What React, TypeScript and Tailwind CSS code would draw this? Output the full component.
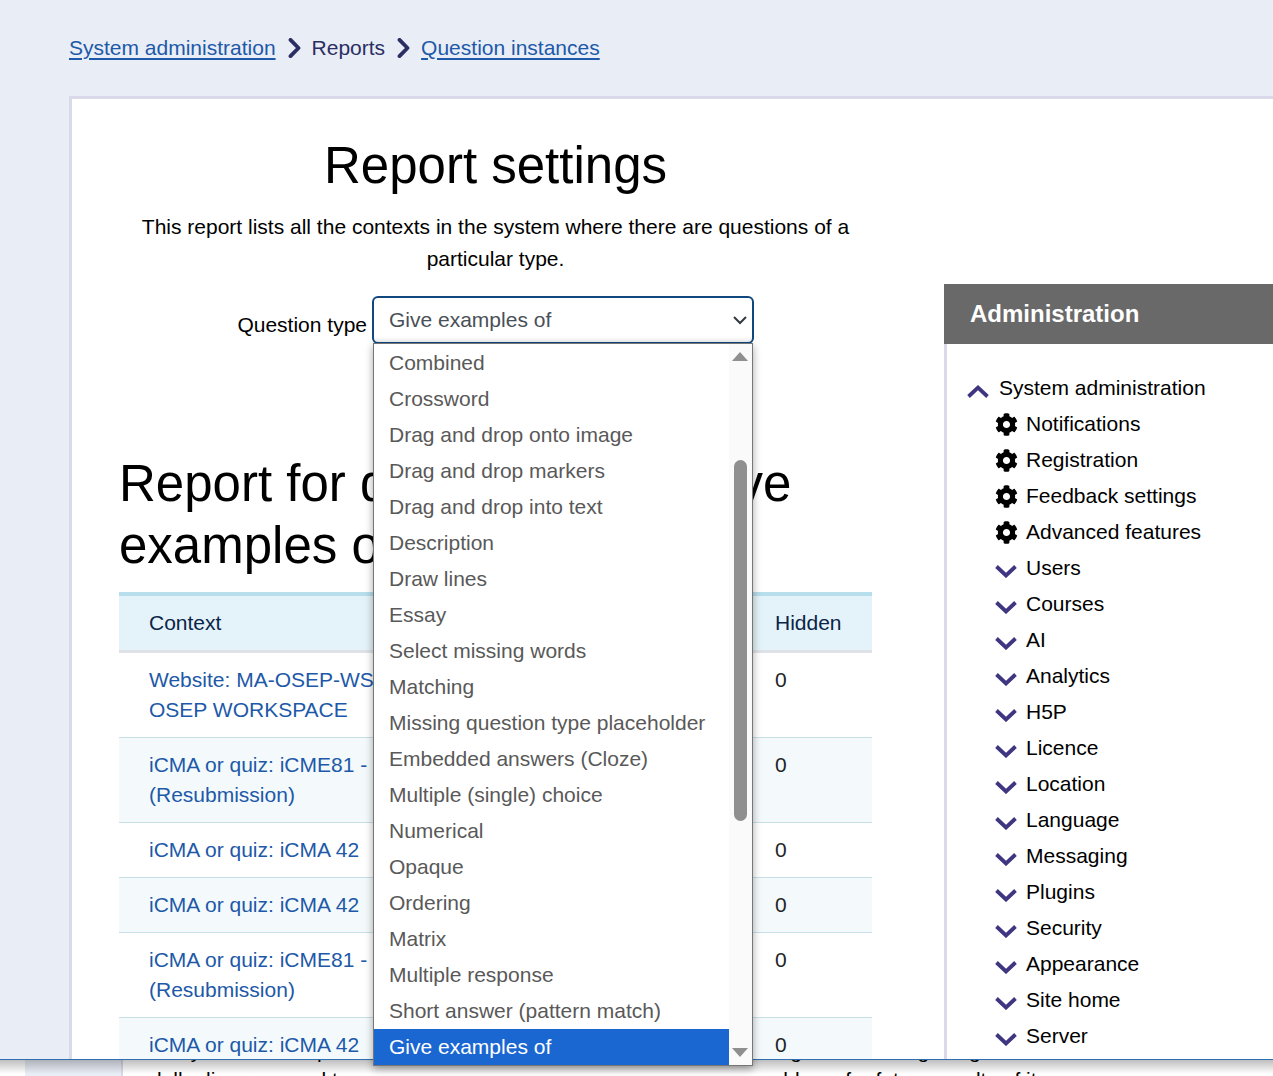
import { FaCog } from 'react-icons/fa';

const sans = "font-['Liberation_Sans',Arial,sans-serif]";

const options = [
  'Combined',
  'Crossword',
  'Drag and drop onto image',
  'Drag and drop markers',
  'Drag and drop into text',
  'Description',
  'Draw lines',
  'Essay',
  'Select missing words',
  'Matching',
  'Missing question type placeholder',
  'Embedded answers (Cloze)',
  'Multiple (single) choice',
  'Numerical',
  'Opaque',
  'Ordering',
  'Matrix',
  'Multiple response',
  'Short answer (pattern match)',
];

const rows = [
  { lines: ['Website: MA-OSEP-WS', 'OSEP WORKSPACE'], tint: false },
  { lines: ['iCMA or quiz: iCME81 -', '(Resubmission)'], tint: true },
  { lines: ['iCMA or quiz: iCMA 42'], tint: false },
  { lines: ['iCMA or quiz: iCMA 42'], tint: true },
  { lines: ['iCMA or quiz: iCME81 -', '(Resubmission)'], tint: false },
  { lines: ['iCMA or quiz: iCMA 42'], tint: true },
];

const adminGear = ['Notifications', 'Registration', 'Feedback settings', 'Advanced features'];
const adminChevron = [
  'Users',
  'Courses',
  'AI',
  'Analytics',
  'H5P',
  'Licence',
  'Location',
  'Language',
  'Messaging',
  'Plugins',
  'Security',
  'Appearance',
  'Site home',
  'Server',
];

const Crumb = () => (
  <svg width="13" height="20" viewBox="0 0 13 20" className="mr-[11px] ml-3 shrink-0" fill="none">
    <path d="M2.5 1.8 L10.5 10 L2.5 18.2" stroke="#2b2e63" strokeWidth="3.8" strokeLinejoin="round" strokeLinecap="round" />
  </svg>
);

const Chevron = ({ up = false }: { up?: boolean }) => (
  <svg width="22" height="14" viewBox="0 0 22 14" fill="none" className="mt-[5px] shrink-0">
    <path d={up ? 'M1.5 12.5 L11 3.5 L20.5 12.5' : 'M1.5 2.5 L11 11.5 L20.5 2.5'} stroke="#3f3681" strokeWidth="3.8" />
  </svg>
);

const App = () => {
  return (
    <div className={`${sans} relative h-[1076px] w-[1273px] overflow-hidden bg-white`}>
      <div className="h-[1060px] overflow-hidden border-b border-[#2f6fb0] bg-[#e9edf6] pl-[69px]">
        <nav className="flex h-[96px] items-center pb-[1px] text-[21px] text-[#2b2e63]">
          <a className="text-[#1d59a8] underline decoration-2 underline-offset-[3px]">System administration</a>
          <Crumb />
          <span>Reports</span>
          <Crumb />
          <a className="text-[#1d59a8] underline decoration-2 underline-offset-[3px]">Question instances</a>
        </nav>

        <div className="flex h-[1000px] border-t-[3px] border-l-[3px] border-[#d9d9e9] bg-white">
          <main className="ml-[47px] w-[753px] shrink-0 text-black">
            <h2 className="pt-[34px] text-center text-[51px] leading-[66px]">Report settings</h2>
            <p className="mx-auto mt-[12px] w-[730px] text-center text-[21px] leading-[32px]">
              This report lists all the contexts in the system where there are questions of a particular type.
            </p>
            <div className="mt-[21px] flex">
              <label className="w-[248px] pt-[17px] text-right text-[21px] leading-[23px]">Question type</label>
              <div className="ml-[5px] flex h-[48px] w-[382px] items-center justify-between rounded-[6px] border-[2.5px] border-[#11477f] bg-white pr-[4px] pl-[15px] text-[21px] text-[#495057] shadow-[inset_0_-6px_6px_-6px_rgba(0,0,0,0.12)]">
                <span>Give examples of</span>
                <svg width="16" height="10" viewBox="0 0 16 10" fill="none">
                  <path d="M2 2 L8 8 L14 2" stroke="#343a40" strokeWidth="2" />
                </svg>
              </div>
            </div>
            <h2 className="mt-[109px] text-[51px] leading-[62px]">
              Report for question type <span className="ml-[9px]">Give</span>
              <br />
              examples of
            </h2>
            <div className="mt-[15px]">
              <div className="flex h-[61px] items-center border-t-4 border-b-[3px] border-t-[#b7deeb] border-b-[#dee2e6] bg-[#e4f3f9] text-[21px] text-[#0b2447]">
                <span className="w-[626px] pl-[30px]">Context</span>
                <span className="pl-[30px]">Hidden</span>
              </div>
              {rows.map((row, i) => (
                <div
                  key={i}
                  className={`flex border-b border-[#c6dfe8] pt-[12px] pb-[12px] text-[21px] leading-[30px] ${row.tint ? 'bg-[#f4f9fc]' : 'bg-white'}`}
                >
                  <a className="w-[626px] pl-[30px] text-[#1d59a8]">
                    {row.lines.map((line) => (
                      <span key={line} className="block">
                        {line}
                      </span>
                    ))}
                  </a>
                  <span className="pl-[30px] text-[#212529]">0</span>
                </div>
              ))}
            </div>
          </main>

          <aside className="mt-[185px] ml-[72px] flex-1">
            <div className="flex h-[60px] items-center bg-[#696969] pl-[26px] text-[24px] font-bold text-white">
              Administration
            </div>
            <div className="h-[800px] border-l-[3px] border-[#d9d9e9] pt-[26px] pl-[20px] text-[21px] text-black">
              <div className="flex h-[36px] items-center gap-[10px]">
                <Chevron up />
                <span>System administration</span>
              </div>
              <ul className="pl-[28px]">
                {adminGear.map((item) => (
                  <li key={item} className="flex h-[36px] items-center gap-[8px]">
                    <FaCog className="h-[23px] w-[23px] shrink-0 text-black" />
                    <span>{item}</span>
                  </li>
                ))}
                {adminChevron.map((item) => (
                  <li key={item} className="flex h-[36px] items-center gap-[9px]">
                    <Chevron />
                    <span>{item}</span>
                  </li>
                ))}
              </ul>
            </div>
          </aside>
        </div>
      </div>

      {/* page under the panel, only a sliver shows */}
      <div className="relative flex h-[16px] overflow-hidden bg-white text-[21px] leading-[29px] text-black">
        <div className="ml-[25px] h-full w-[98px] shrink-0 border-r-2 border-[#d9d9e9] bg-[#e9edf6]" />
        <p className="ml-[27px] -mt-[24px] w-[222px] shrink-0 whitespace-nowrap">
          Many of the ones p
          <br />
          dully diagrams and t
        </p>
        <p className="ml-[381px] -mt-[24px] whitespace-nowrap">
          assignments and getting results
          <br />
          problems for future results of it
        </p>
        <div className="absolute inset-x-0 top-0 h-[14px] bg-gradient-to-b from-black/25 to-transparent" />
      </div>

      <div className="absolute top-[343px] left-[373px] h-[723px] w-[380px] overflow-hidden border border-[#767676] bg-white text-[21px] text-[#595959] shadow-[0_3px_8px_rgba(0,0,0,0.35)]">
        <ul className="w-[355px] pt-[1px]">
          {options.map((option) => (
            <li key={option} className="flex h-[36px] items-center pl-[15px]">
              {option}
            </li>
          ))}
          <li className="flex h-[36px] items-center bg-[#1a67d2] pl-[15px] text-white">Give examples of</li>
        </ul>
        <div className="absolute top-0 right-0 bottom-0 w-[23px] bg-[#fafafa]">
          <svg width="16" height="9" viewBox="0 0 16 9" className="absolute top-[8px] left-[3px]">
            <path d="M0 9 L8 0 L16 9 Z" fill="#8f8f8f" />
          </svg>
          <div className="absolute top-[116px] left-[5px] h-[361px] w-[13px] rounded-full bg-[#8f8f8f]" />
          <svg width="16" height="9" viewBox="0 0 16 9" className="absolute bottom-[8px] left-[3px]">
            <path d="M0 0 L16 0 L8 9 Z" fill="#8f8f8f" />
          </svg>
        </div>
      </div>
    </div>
  );
};

export default App;
